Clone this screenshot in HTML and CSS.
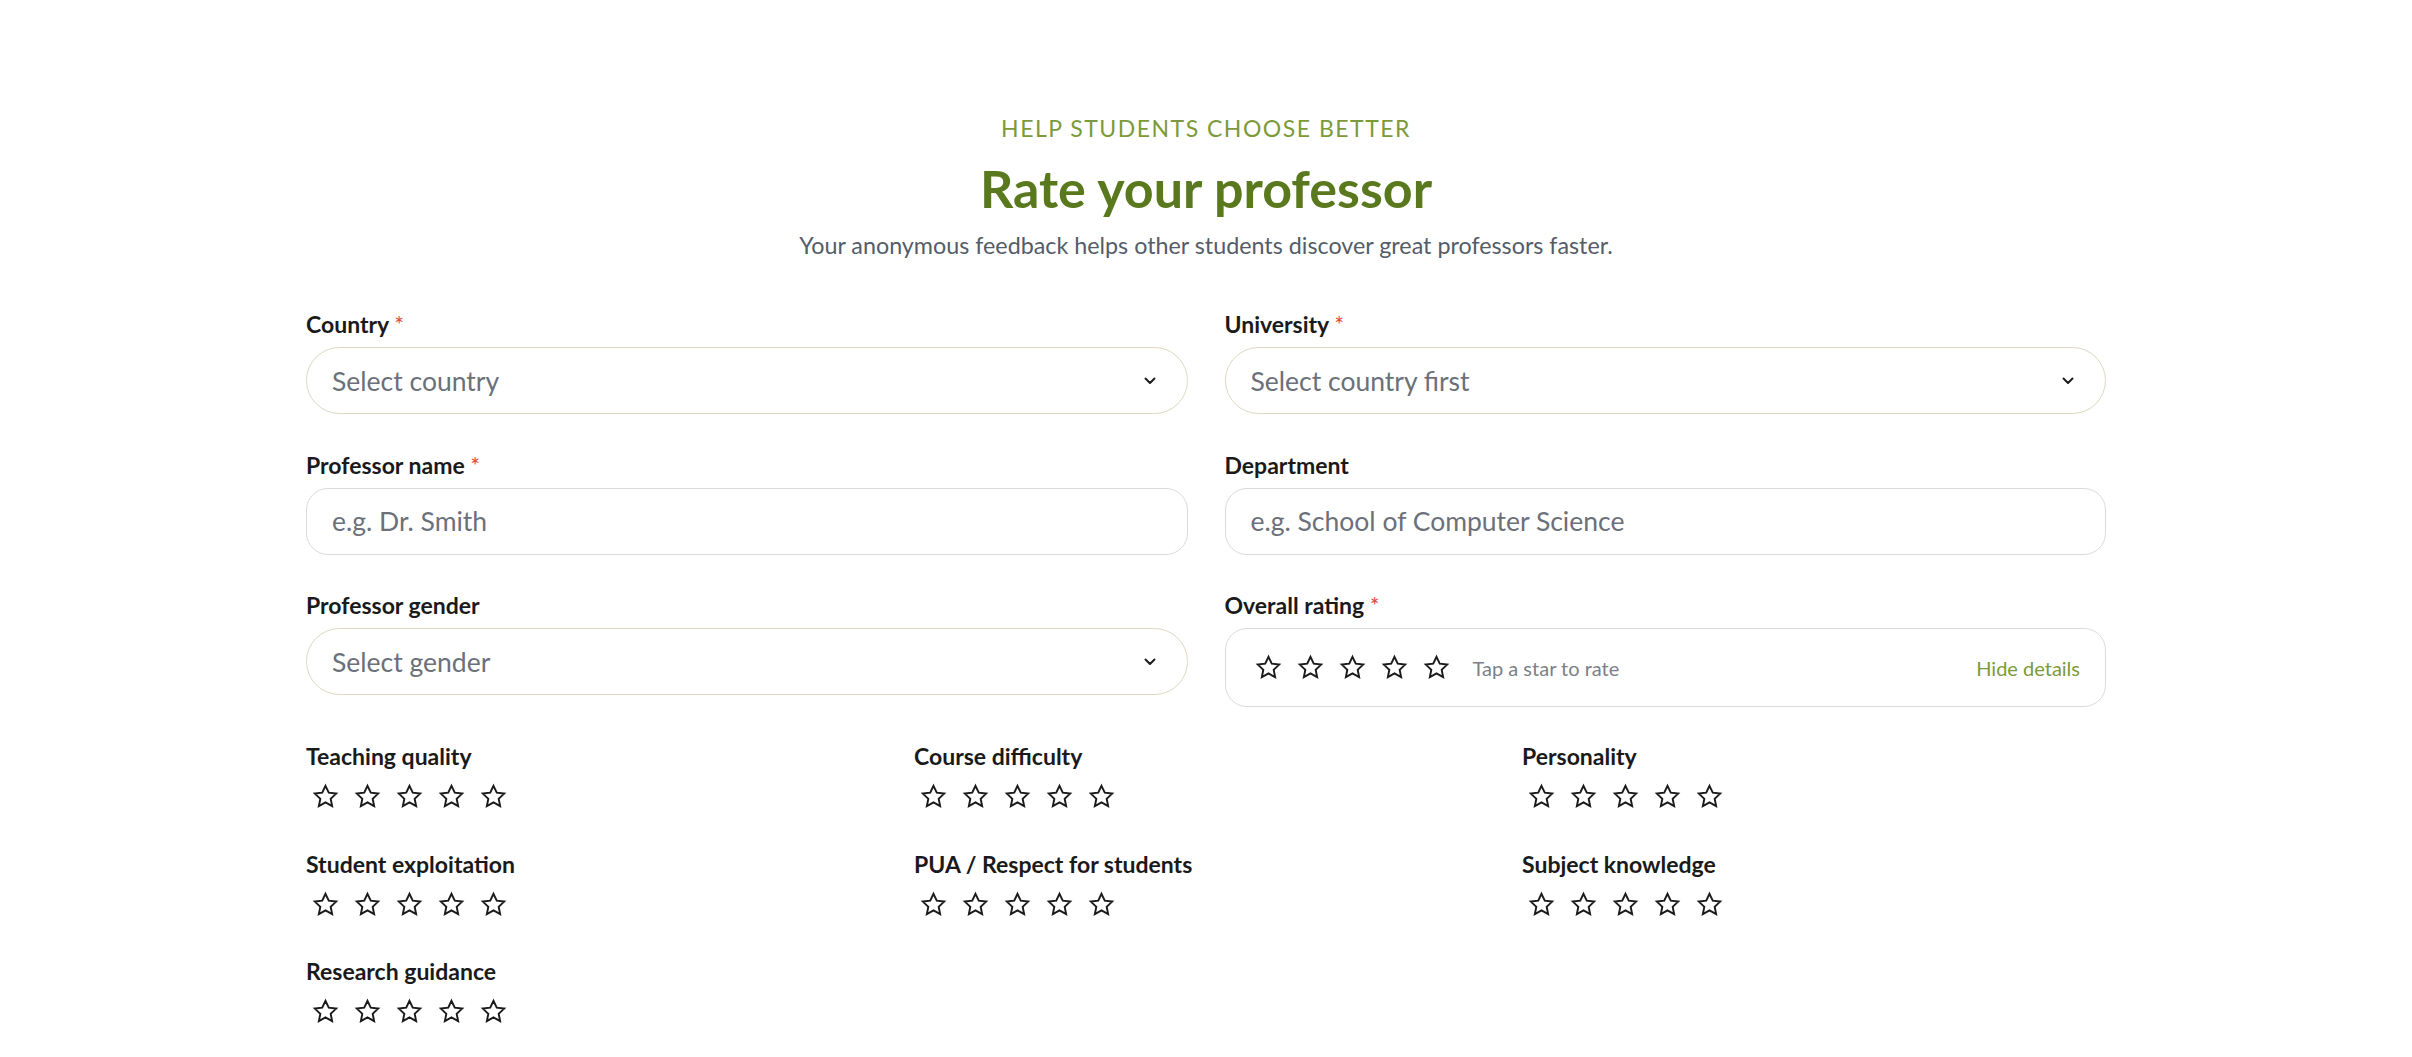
FILE: index.html
```html
<!DOCTYPE html>
<html lang="en">
<head>
    <meta charset="UTF-8">
    <meta name="viewport" content="width=device-width, initial-scale=1.0">
    <title>Rate your professor</title>
    <link rel="stylesheet" href="styles.css">
</head>
<body>

<svg class="sprite" xmlns="http://www.w3.org/2000/svg">
    <symbol id="star" viewBox="0 0 24 24">
        <polygon points="12 2.5 14.9 8.6 21.5 9.4 16.6 14 17.9 20.6 12 17.3 6.1 20.6 7.4 14 2.5 9.4 9.1 8.6" fill="none" stroke="currentColor" stroke-width="1.7" stroke-linejoin="miter"/>
    </symbol>
    <symbol id="chevron" viewBox="0 0 12 8">
        <polyline points="1.5 1.5 6 6 10.5 1.5" fill="none" stroke="currentColor" stroke-width="2" stroke-linecap="round" stroke-linejoin="round"/>
    </symbol>
</svg>

<main class="page">
    <header class="intro">
        <p class="eyebrow">Help students choose better</p>
        <h1>Rate your professor</h1>
        <p class="lead">Your anonymous feedback helps other students discover great professors faster.</p>
    </header>

    <form class="rate-form">
        <div class="fields">
            <div class="field">
                <label>Country <span class="req">*</span></label>
                <div class="select">
                    <span>Select country</span>
                    <svg class="chev"><use href="#chevron"/></svg>
                </div>
            </div>
            <div class="field">
                <label>University <span class="req">*</span></label>
                <div class="select">
                    <span>Select country first</span>
                    <svg class="chev"><use href="#chevron"/></svg>
                </div>
            </div>
            <div class="field">
                <label>Professor name <span class="req">*</span></label>
                <div class="input">e.g. Dr. Smith</div>
            </div>
            <div class="field">
                <label>Department</label>
                <div class="input">e.g. School of Computer Science</div>
            </div>
            <div class="field">
                <label>Professor gender</label>
                <div class="select">
                    <span>Select gender</span>
                    <svg class="chev"><use href="#chevron"/></svg>
                </div>
            </div>
            <div class="field">
                <label>Overall rating <span class="req">*</span></label>
                <div class="overall">
                    <div class="stars">
                        <svg class="star"><use href="#star"/></svg>
                        <svg class="star"><use href="#star"/></svg>
                        <svg class="star"><use href="#star"/></svg>
                        <svg class="star"><use href="#star"/></svg>
                        <svg class="star"><use href="#star"/></svg>
                    </div>
                    <span class="hint">Tap a star to rate</span>
                    <a class="toggle" href="#">Hide details</a>
                </div>
            </div>
        </div>

        <div class="details">
            <div class="detail">
                <div class="detail-label">Teaching quality</div>
                <div class="stars">
                    <svg class="star"><use href="#star"/></svg><svg class="star"><use href="#star"/></svg><svg class="star"><use href="#star"/></svg><svg class="star"><use href="#star"/></svg><svg class="star"><use href="#star"/></svg>
                </div>
            </div>
            <div class="detail">
                <div class="detail-label">Course difficulty</div>
                <div class="stars">
                    <svg class="star"><use href="#star"/></svg><svg class="star"><use href="#star"/></svg><svg class="star"><use href="#star"/></svg><svg class="star"><use href="#star"/></svg><svg class="star"><use href="#star"/></svg>
                </div>
            </div>
            <div class="detail">
                <div class="detail-label">Personality</div>
                <div class="stars">
                    <svg class="star"><use href="#star"/></svg><svg class="star"><use href="#star"/></svg><svg class="star"><use href="#star"/></svg><svg class="star"><use href="#star"/></svg><svg class="star"><use href="#star"/></svg>
                </div>
            </div>
            <div class="detail">
                <div class="detail-label">Student exploitation</div>
                <div class="stars">
                    <svg class="star"><use href="#star"/></svg><svg class="star"><use href="#star"/></svg><svg class="star"><use href="#star"/></svg><svg class="star"><use href="#star"/></svg><svg class="star"><use href="#star"/></svg>
                </div>
            </div>
            <div class="detail">
                <div class="detail-label">PUA / Respect for students</div>
                <div class="stars">
                    <svg class="star"><use href="#star"/></svg><svg class="star"><use href="#star"/></svg><svg class="star"><use href="#star"/></svg><svg class="star"><use href="#star"/></svg><svg class="star"><use href="#star"/></svg>
                </div>
            </div>
            <div class="detail">
                <div class="detail-label">Subject knowledge</div>
                <div class="stars">
                    <svg class="star"><use href="#star"/></svg><svg class="star"><use href="#star"/></svg><svg class="star"><use href="#star"/></svg><svg class="star"><use href="#star"/></svg><svg class="star"><use href="#star"/></svg>
                </div>
            </div>
            <div class="detail">
                <div class="detail-label">Research guidance</div>
                <div class="stars">
                    <svg class="star"><use href="#star"/></svg><svg class="star"><use href="#star"/></svg><svg class="star"><use href="#star"/></svg><svg class="star"><use href="#star"/></svg><svg class="star"><use href="#star"/></svg>
                </div>
            </div>
        </div>
    </form>
</main>

</body>
</html>
```

FILE: styles.css
```css
body {
    margin: 0;
    background: #ffffff;
    font-family: 'Lato', 'Open Sans', sans-serif;
    color: #1c1c1c;
}

.sprite {
    display: none;
}

.page {
    width: 1800px;
    margin: 0 auto;
    padding-top: 112px;
}

/* Header */
.intro {
    text-align: center;
}

.eyebrow {
    margin: 0;
    font-size: 23px;
    line-height: 32px;
    letter-spacing: 1.5px;
    text-transform: uppercase;
    color: #7c9a3a;
}

.intro h1 {
    margin: 14px 0 0;
    font-size: 52px;
    line-height: 60px;
    font-weight: 700;
    color: #5a781d;
}

.lead {
    margin: 12px 0 0;
    font-size: 23.3px;
    line-height: 30px;
    color: #545c68;
}

/* Main fields */
.rate-form {
    margin-top: 49px;
}

.fields {
    display: grid;
    grid-template-columns: 1fr 1fr;
    column-gap: 37px;
    row-gap: 35.5px;
    align-items: start;
}

.field label {
    display: block;
    font-size: 23px;
    line-height: 30px;
    font-weight: 700;
    color: #1a1a1a;
    margin-bottom: 8px;
}

.req {
    color: #e04b3f;
    font-weight: 400;
}

.select,
.input {
    box-sizing: border-box;
    height: 67px;
    display: flex;
    align-items: center;
    padding: 0 31px 0 25px;
    font-size: 26.5px;
    color: #6b7079;
    background: #ffffff;
}

.select {
    justify-content: space-between;
    border: 1.5px solid #dcd8c2;
    border-radius: 34px;
}

.input {
    border: 1.5px solid #d9dbde;
    border-radius: 22px;
}

.chev {
    width: 12px;
    height: 8px;
    color: #1e1e1e;
}

.overall {
    box-sizing: border-box;
    height: 79px;
    display: flex;
    align-items: center;
    padding: 0 25px 0 29px;
    border: 1.5px solid #d9dbde;
    border-radius: 22px;
}

.stars {
    display: flex;
    gap: 15px;
}

.star {
    width: 27px;
    height: 27px;
    color: #1a1a1a;
}

.hint {
    margin-left: 23px;
    font-size: 20px;
    color: #7b8089;
    flex: 1;
}

.toggle {
    font-size: 20px;
    color: #7c9a3a;
    text-decoration: none;
}

/* Detail ratings */
.details {
    display: grid;
    grid-template-columns: repeat(3, 1fr);
    column-gap: 24px;
    row-gap: 38.5px;
    margin-top: 34px;
}

.detail-label {
    font-size: 23px;
    line-height: 30px;
    font-weight: 700;
    color: #1a1a1a;
    margin-bottom: 12px;
}

.detail .stars {
    padding-left: 5.5px;
}
```
